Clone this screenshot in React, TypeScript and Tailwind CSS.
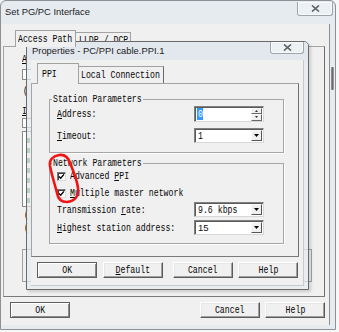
import React from "react";

const T = "font-['Liberation_Sans','Arial',sans-serif] text-[9.4px] text-[#1b1b1b]";

function X({
  children,
  center,
  first,
  className,
}: {
  children: React.ReactNode;
  center?: boolean;
  first?: boolean;
  className?: string;
}) {
  return (
    <span
      className={`block w-fit whitespace-nowrap font-['Liberation_Mono','DejaVu_Sans_Mono',monospace] text-[10.4px] leading-[10px] text-[#050505] scale-x-[0.79] ${
        center ? "origin-center" : "origin-left"
      } ${first ? "first-letter:underline first-letter:underline-offset-[1px]" : ""} ${className ?? ""}`}
    >
      {children}
    </span>
  );
}

function CloseX({ w, h }: { w: number; h: number }) {
  return (
    <div
      className="flex items-center justify-center rounded-b-[3px] border border-t-0 border-[#9ea4ab] bg-[#eef1f4] shadow-[inset_0_0_0_1px_#f9fafb]"
      style={{ width: w, height: h }}
    >
      <svg width="9" height="7" viewBox="0 0 9 7">
        <path d="M1 0.5 L8 6.5 M8 0.5 L1 6.5" stroke="#5a5f66" strokeWidth="1.6" />
      </svg>
    </div>
  );
}

function Btn({ children, def, first }: { children: React.ReactNode; def?: boolean; first?: boolean }) {
  return def ? (
    <div className="w-[60px] h-[16px] border border-[#5e5e5e] bg-[#f0f0f0] shadow-[inset_1px_1px_0_#ffffff,inset_-1px_-1px_0_#8a8a8a] flex items-center justify-center">
      <X center first={first}>
        {children}
      </X>
    </div>
  ) : (
    <div className="w-[60px] h-[16px] border border-t-[#ffffff] border-l-[#ffffff] border-r-[#5a5a5a] border-b-[#5a5a5a] bg-[#f0f0f0] shadow-[inset_-1px_-1px_0_#a0a0a0,inset_1px_1px_0_#e6e6e6] flex items-center justify-center">
      <X center first={first}>
        {children}
      </X>
    </div>
  );
}

function DropBtn() {
  return (
    <div className="w-[11px] h-[11px] bg-[#f0f0f0] border border-t-[#fafafa] border-l-[#fafafa] border-r-[#555] border-b-[#555] flex items-center justify-center">
      <svg width="5" height="3" viewBox="0 0 5 3">
        <path d="M0 0 H5 L2.5 3 Z" fill="#000" />
      </svg>
    </div>
  );
}

function Combo({ value, sans }: { value: string; sans?: boolean }) {
  return (
    <div className="w-[70px] h-[15px] bg-white border border-[#808080] border-r-[#d8d8d8] border-b-[#d8d8d8] shadow-[inset_1px_1px_0_#5a5a5a] flex items-center justify-between pl-[3px] pr-[1px]">
      {sans ? (
        <span className="block font-['Liberation_Sans',Arial,sans-serif] text-[9.5px] leading-[10px] text-[#111]">{value}</span>
      ) : (
        <X>{value}</X>
      )}
      <DropBtn />
    </div>
  );
}

function Spin() {
  return (
    <div className="w-[70px] h-[16px] bg-white border border-[#808080] border-r-[#d8d8d8] border-b-[#d8d8d8] shadow-[inset_1px_1px_0_#5a5a5a] flex items-center justify-between pl-[2px] pr-[1px]">
      <div className="bg-[#3399ff] w-[6px] h-[12px] flex items-center pl-[1px]">
        <X className="text-white">0</X>
      </div>
      <div className="flex flex-col gap-0">
        <div className="w-[11px] h-[6px] bg-[#f0f0f0] border border-t-[#fafafa] border-l-[#fafafa] border-r-[#666] border-b-[#666] flex items-center justify-center">
          <svg width="3" height="2" viewBox="0 0 3 2">
            <path d="M0 2 H3 L1.5 0 Z" fill="#333" />
          </svg>
        </div>
        <div className="w-[11px] h-[7px] bg-[#f0f0f0] border border-t-[#fafafa] border-l-[#fafafa] border-r-[#666] border-b-[#666] flex items-center justify-center">
          <svg width="3" height="2" viewBox="0 0 3 2">
            <path d="M0 0 H3 L1.5 2 Z" fill="#333" />
          </svg>
        </div>
      </div>
    </div>
  );
}

function Check() {
  return (
    <div className="w-[9px] h-[9px] shrink-0 bg-white border border-[#7a7a7a] border-r-[#dcdcdc] border-b-[#dcdcdc] shadow-[inset_1px_1px_0_#404040] flex items-center justify-center">
      <svg width="7" height="7" viewBox="0 0 7 7">
        <path d="M1 3.4 L2.7 5.2 L6 1.4" stroke="#000" strokeWidth="1.4" fill="none" />
      </svg>
    </div>
  );
}

export default function App() {
  return (
    <div className="relative w-[339px] h-[332px] bg-[#f7f7f7] overflow-hidden">
      {/* Outer window */}
      <div className="w-[336px] h-[330px] border border-[#8d9197] rounded-t-[6px] bg-[#e6ebf0] flex flex-col">
        <div className="h-[23px] flex justify-between items-start">
          <div className={`${T} pl-[4px] h-[23px] flex items-center`}>Set PG/PC Interface</div>
          <div className="mr-[2px] mt-[1px]">
            <CloseX w={36} h={14} />
          </div>
        </div>
        <div className="flex">
          <div className="w-[329px] h-[301px] bg-[#f0f0f0] border-r border-[#8e8e8e] pl-[2px] pt-[6px]">
            {/* tab strip */}
            <div className="flex items-end h-[16px] pl-[12px]">
              <div className="relative z-10 w-[61px] h-[17px] mb-[-1px] border border-b-0 border-[#a2a2a2] bg-[#f0f0f0] flex items-center pl-[2px]">
                <X>Access Path</X>
              </div>
              <div className="w-[55px] h-[14px] border border-b-0 border-l-0 border-[#a2a2a2] flex items-center pl-[3px]">
                <X first>LLDP / DCP</X>
              </div>
            </div>
            {/* tab panel (mostly hidden behind the Properties dialog) */}
            <div className="w-[322px] h-[251px] border border-[#a4a4a4] border-r-[#6e6e6e] border-b-[#7a7a7a] pl-[18px] pt-[4px] flex flex-col">
              <div className="h-[10px] mt-[3px]">
                <X first>A</X>
              </div>
              <div className="mt-[5px] w-[280px] h-[11px] bg-white border border-[#8a8a8a]" />
              <div className="mt-[6px] pl-[1px] h-[10px]">
                <X>(</X>
              </div>
              <div className="mt-[10px] h-[10px]">
                <X first>I</X>
              </div>
              <div className="mt-[2px] w-[200px] h-[10px] bg-white border border-[#8a8a8a]" />
              <div className="mt-[3px] w-[200px] h-[76px] bg-white border border-[#8a8a8a] pl-[4px] pt-[6px] flex flex-col gap-[5px]">
                <div className="w-[3px] h-[5px] bg-[#4e9a58]" />
                <div className="w-[3px] h-[5px] bg-[#4e9a58]" />
                <div className="w-[3px] h-[5px] bg-[#4e9a58]" />
                <div className="w-[3px] h-[5px] bg-[#4e9a58]" />
                <div className="w-[3px] h-[5px] bg-[#4e9a58]" />
                <div className="w-[3px] h-[5px] bg-[#4e9a58]" />
                <div className="w-[3px] h-[5px] bg-[#4e9a58]" />
              </div>
              <div className="mt-[3px] pl-[2px] h-[10px]">
                <X>(</X>
              </div>
              <div className="mt-[3px] pl-[2px] h-[10px]">
                <X>(</X>
              </div>
              <div className="mt-[16px] w-[290px] h-[33px] border border-[#a0a0a0]" />
            </div>
            {/* outer buttons */}
            <div className="flex mt-[5px] pl-[7px]">
              <Btn def>OK</Btn>
              <div className="ml-[130px] flex gap-[5px]">
                <Btn>Cancel</Btn>
                <Btn>Help</Btn>
              </div>
            </div>
          </div>
          <div className="w-[5px] pl-[1px] pt-[43px]">
            <div className="w-[3px] h-[23px] bg-[linear-gradient(90deg,#9a9a9a,#6b6b6b,#b0b0b0)] rounded-[1px]" />
          </div>
        </div>
      </div>

      {/* Inner dialog */}
      <div className="absolute left-[26px] top-[41px] w-[283px] h-[249px] border border-[#6a6a6a] rounded-t-[5px] bg-[#e6eaee]/70 flex flex-col shadow-[2px_2px_3px_rgba(0,0,0,0.15)]">
        <div className="h-[18px] flex justify-between items-start bg-[#e3e8ee] rounded-t-[4px]">
          <div className={`${T} pl-[5px] h-[18px] flex items-center`}>Properties - PC/PPI cable.PPI.1</div>
          <div className="mr-[4px]">
            <CloseX w={34} h={12} />
          </div>
        </div>
        <div className="ml-[4px] w-[273px] h-[226px] bg-[#f0f0f0] border-r border-b border-[#c9c9c9] pt-[3px]">
          {/* tabs */}
          <div className="flex items-end h-[20px] pl-[6px]">
            <div className="relative z-10 w-[42px] h-[21px] mb-[-1px] border border-b-0 border-[#a2a2a2] bg-[#f0f0f0] flex items-center pl-[4px]">
              <X>PPI</X>
            </div>
            <div className="w-[85px] h-[17px] border border-b-0 border-l-0 border-[#a2a2a2] border-r-[#6a6a6a] flex items-center pl-[2px]">
              <X>Local Connection</X>
            </div>
          </div>
          {/* panel */}
          <div className="w-[268px] h-[174px] border border-[#a4a4a4] border-r-[#6e6e6e] border-b-[#7a7a7a] pl-[17px] pt-[10px] flex flex-col">
            <fieldset className="w-[235px] border border-[#a6a6a6] shadow-[1px_1px_0_#ffffff]">
              <legend className="ml-[2px] px-[1px] w-[91px] h-[10px] leading-[10px] text-[10px]">
                <X>Station Parameters</X>
              </legend>
              <div className="pl-[7px] pt-[2px] pb-[9px] flex flex-col gap-[6px]">
                <div className="flex items-center h-[16px]">
                  <div className="w-[137px] shrink-0">
                    <X first>Address:</X>
                  </div>
                  <Spin />
                </div>
                <div className="flex items-center h-[15px]">
                  <div className="w-[137px] shrink-0">
                    <X first>Timeout:</X>
                  </div>
                  <Combo value="1" />
                </div>
              </div>
            </fieldset>
            <fieldset className="mt-[5px] w-[235px] border border-[#a6a6a6] shadow-[1px_1px_0_#ffffff]">
              <legend className="ml-[2px] px-[1px] w-[91px] h-[10px] leading-[10px] text-[10px]">
                <X>Network Parameters</X>
              </legend>
              <div className="pl-[7px] pt-[2px] pb-[8px] flex flex-col">
                <div className="flex items-center h-[12px] gap-[4px]">
                  <Check />
                  <X className="bg-[linear-gradient(#0a0a0a,#0a0a0a)] bg-no-repeat bg-[length:6px_1px] bg-[position:56px_9px]">
                    Advanced PPI
                  </X>
                </div>
                <div className="flex items-center h-[12px] gap-[4px] mt-[5px]">
                  <Check />
                  <X first>Multiple master network</X>
                </div>
                <div className="flex items-center h-[15px] mt-[3px]">
                  <div className="w-[137px] shrink-0">
                    <X className="bg-[linear-gradient(#0a0a0a,#0a0a0a)] bg-no-repeat bg-[length:6px_1px] bg-[position:81px_9px]">
                      Transmission rate:
                    </X>
                  </div>
                  <Combo value="9.6 kbps" />
                </div>
                <div className="flex items-center h-[15px] mt-[3px]">
                  <div className="w-[137px] shrink-0">
                    <X first>Highest station address:</X>
                  </div>
                  <Combo value="15" sans />
                </div>
              </div>
            </fieldset>
          </div>
          {/* inner buttons */}
          <div className="flex mt-[5px] pl-[6px]">
            <Btn def>OK</Btn>
            <div className="ml-[6px]">
              <Btn first>Default</Btn>
            </div>
            <div className="ml-[10px]">
              <Btn>Cancel</Btn>
            </div>
            <div className="ml-[5px]">
              <Btn>Help</Btn>
            </div>
          </div>
        </div>
      </div>

      {/* red hand-drawn loop */}
      <svg className="absolute left-0 top-0 pointer-events-none" width="339" height="332" viewBox="0 0 339 332">
        <path
          d="M50 166 C49 160 53 156 59 155 C65 154 68 157 70 163 C73 170 77 180 78 188 C79 196 75 201 67 202 C61 202 58 199 57 193 C55 185 52 176 50 166 Z"
          stroke="#f01414"
          strokeWidth="2.6"
          fill="none"
          strokeLinecap="round"
        />
      </svg>
    </div>
  );
}
